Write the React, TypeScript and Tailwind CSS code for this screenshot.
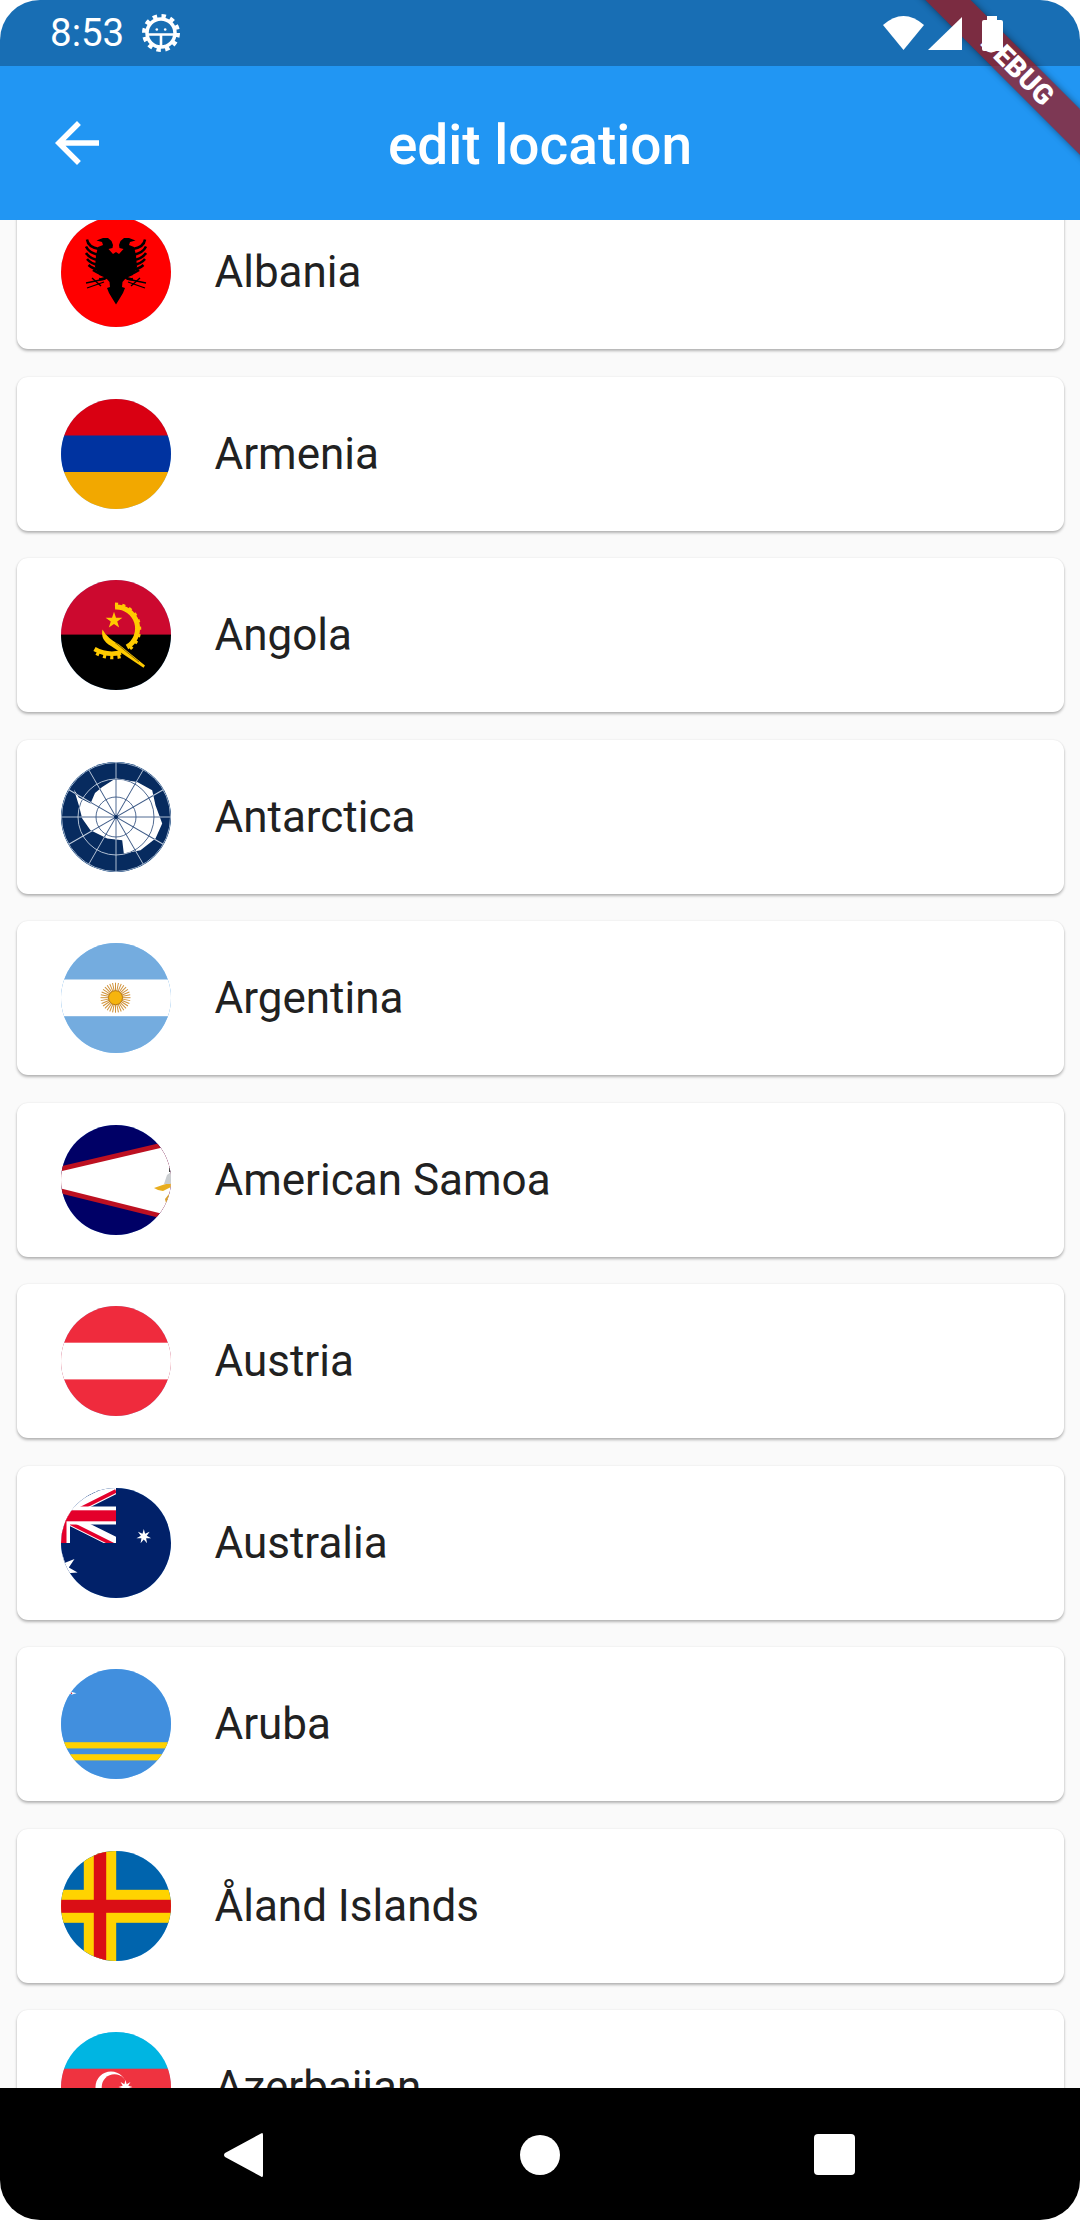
import type { ReactNode } from "react";

function starPoints(cx: number, cy: number, outer: number, inner: number, n: number) {
  const pts: string[] = [];
  for (let i = 0; i < n * 2; i++) {
    const r = i % 2 === 0 ? outer : inner;
    const a = (Math.PI * i) / n - Math.PI / 2;
    pts.push(`${(cx + r * Math.cos(a)).toFixed(2)},${(cy + r * Math.sin(a)).toFixed(2)}`);
  }
  return pts.join(" ");
}

const spokes = [0, 30, 60, 90, 120, 150];

function EagleHalf() {
  return (
    <g>
      <path
        d="M55 35L52 37L47.5 32L51.5 31L52 28L50.5 24L47 21L42 21L35.5 23.5L41 25L42 28L37 30L35 38L34 50L38 58L45 61L48.5 65L49 70L46 71L48 76L51 81L55 87.5Z"
        fill="#000"
      />
      <g fill="none" stroke="#000" strokeWidth="2.5">
        <path d="M26 22.5Q27 30 38 32" />
        <path d="M25 29.5Q28 36 38 38" />
        <path d="M25 36Q29 42 38 43" />
        <path d="M26 42Q30 47 38 48" />
        <path d="M27.5 48Q32 52 39 53" />
        <path d="M32 53Q36 56 42 57" />
        <path d="M38 62Q43 63 47 59" />
      </g>
      <g fill="none" stroke="#000" strokeWidth="1.3">
        <path d="M25 66L44 62" />
        <path d="M26 71L43 65" />
        <path d="M31 61L40 69" />
      </g>
    </g>
  );
}

function Albania() {
  return (
    <>
      <rect width="110" height="110" fill="#ff0000" />
      <EagleHalf />
      <g transform="translate(110 0) scale(-1 1)">
        <EagleHalf />
      </g>
    </>
  );
}

function Armenia() {
  return (
    <>
      <rect width="110" height="37" fill="#d90012" />
      <rect y="36.5" width="110" height="37" fill="#0033a0" />
      <rect y="73" width="110" height="37" fill="#f2a800" />
    </>
  );
}

function Angola() {
  return (
    <>
      <rect width="110" height="55" fill="#cc092f" />
      <rect y="54.6" width="110" height="56" fill="#000" />
      <g fill="none" stroke="#ffcb00">
        <path d="M54 27A21.5 21.5 0 0 1 66 67" strokeWidth="5" />
        <path d="M54 25A24 24 0 0 1 67 69" strokeWidth="5" strokeDasharray="3 4" />
        <path d="M33.5 69Q46 76 60 72.5" strokeWidth="4.5" />
        <path d="M36 72Q47 78 60 75" strokeWidth="6.5" strokeDasharray="3 4" />
      </g>
      <polygon points={starPoints(53, 40.5, 8.8, 3.4, 5)} fill="#ffcb00" />
      <path d="M41.5 49.5Q39 60 50 66L82.5 87.8L84 85.5L58 64.5Q46 58 41.5 49.5Z" fill="#ffcb00" />
      <path d="M54 62.5L78 82" stroke="#5a4500" strokeWidth="0.7" />
    </>
  );
}

const antarcticaBlob =
  "M13 27.6L17.8 35.6L29.5 41.6L34 31L41.2 25L54.5 16.6L76.2 20L91.2 28.3L94.5 43.3L101.2 61.6L94.5 76.6L79.5 88.3L62.8 91.6L61.2 78.3L46.2 76.6L29.5 68.3L21.2 56.6L17.8 43.3Z";

function AntarcticaGrid({ color }: { color: string }) {
  return (
    <g fill="none" stroke={color} strokeWidth="0.9">
      <circle cx="55" cy="55" r="20" />
      <circle cx="55" cy="55" r="38" />
      {spokes.map((a) => (
        <line key={a} x1="0" y1="55" x2="110" y2="55" transform={`rotate(${a} 55 55)`} />
      ))}
    </g>
  );
}

function Antarctica() {
  return (
    <>
      <rect width="110" height="110" fill="#072b5f" />
      <AntarcticaGrid color="#c3cfdf" />
      <path d={antarcticaBlob} fill="#fff" />
      <clipPath id="antarctica-land">
        <path d={antarcticaBlob} />
      </clipPath>
      <g clipPath="url(#antarctica-land)">
        <AntarcticaGrid color="#3d5a86" />
      </g>
      <circle cx="55" cy="55" r="2" fill="#072b5f" />
      <circle cx="55" cy="55" r="54.5" fill="none" stroke="#9db0c8" strokeWidth="1" />
    </>
  );
}

function Argentina() {
  return (
    <>
      <rect width="110" height="110" fill="#74acdf" />
      <rect y="36.5" width="110" height="36.7" fill="#fff" />
      <g stroke="#cf9138" strokeWidth="1">
        {Array.from({ length: 16 }).map((_, i) => (
          <line key={i} x1="39.5" y1="54.7" x2="69.5" y2="54.7" transform={`rotate(${i * 11.25} 54.5 54.7)`} />
        ))}
      </g>
      <circle cx="54.5" cy="54.7" r="7" fill="#f6b40e" stroke="#b97d18" strokeWidth="1" />
    </>
  );
}

function AmericanSamoa() {
  return (
    <>
      <rect width="110" height="110" fill="#000066" />
      <polygon points="-1,41.5 110,15.4 110,95.8 -1,68.2" fill="#bd1021" />
      <polygon points="-1,46.5 110,20.4 110,91 -1,63.2" fill="#fff" />
      <path d="M93 63L103 59.5L110 58L110 62L102 66L97 65Z" fill="#e8ad1f" />
      <path d="M103 59L106 50L110 47L110 59Z" fill="#c9cdd0" />
      <path d="M104 74L108 69L110 70L109 76L105 78Z" fill="#d9a02a" />
      <rect x="108" y="43" width="2" height="4" fill="#444" />
    </>
  );
}

function Austria() {
  return (
    <>
      <rect width="110" height="110" fill="#ef2b3d" />
      <rect y="36.7" width="110" height="36.7" fill="#fff" />
    </>
  );
}

function Australia() {
  return (
    <>
      <rect width="110" height="110" fill="#012169" />
      <clipPath id="union-jack">
        <rect x="-55" y="0" width="110" height="55" />
      </clipPath>
      <g clipPath="url(#union-jack)">
        <path d="M-55 0L55 55M55 0L-55 55" stroke="#fff" strokeWidth="11" />
        <path d="M0 27.5L55 0M0 27.5L55 55" stroke="#e4002b" strokeWidth="3.7" transform="translate(0 3)" />
        <rect x="-9" y="0" width="18" height="55" fill="#fff" />
        <rect x="0" y="18.5" width="55" height="18" fill="#fff" />
        <rect x="-5.5" y="0" width="11" height="55" fill="#e4002b" />
        <rect x="0" y="22.3" width="55" height="11" fill="#e4002b" />
      </g>
      <polygon points={starPoints(1, 81, 16, 7, 7)} fill="#fff" />
      <polygon points={starPoints(82.8, 48.5, 7.5, 3, 7)} fill="#fff" />
    </>
  );
}

function Aruba() {
  return (
    <>
      <rect width="110" height="110" fill="#418fde" />
      <rect y="73.2" width="110" height="6.2" fill="#ffd100" />
      <rect y="85.2" width="110" height="6.2" fill="#ffd100" />
      <polygon points="7.5,24.3 11,23 15.5,24.3 11,25.6" fill="#fff" />
      <circle cx="10.5" cy="24.3" r="0.7" fill="#c8102e" />
    </>
  );
}

function Aland() {
  return (
    <>
      <rect width="110" height="110" fill="#0064ad" />
      <rect x="22.8" width="32.4" height="110" fill="#ffd300" />
      <rect y="38.8" width="110" height="33" fill="#ffd300" />
      <rect x="32.8" width="12.4" height="110" fill="#da0e15" />
      <rect y="48.8" width="110" height="13" fill="#da0e15" />
    </>
  );
}

function Azerbaijan() {
  return (
    <>
      <rect width="110" height="37" fill="#00b5e2" />
      <rect y="36.7" width="110" height="37" fill="#ef3340" />
      <rect y="73.3" width="110" height="37" fill="#509e2f" />
      <circle cx="50" cy="55" r="15.5" fill="#fff" />
      <circle cx="53.5" cy="55" r="12.8" fill="#ef3340" />
      <polygon points={starPoints(64.5, 55, 7, 3, 8)} fill="#fff" />
    </>
  );
}

const countries: { name: string; flag: ReactNode }[] = [
  { name: "Albania", flag: <Albania /> },
  { name: "Armenia", flag: <Armenia /> },
  { name: "Angola", flag: <Angola /> },
  { name: "Antarctica", flag: <Antarctica /> },
  { name: "Argentina", flag: <Argentina /> },
  { name: "American Samoa", flag: <AmericanSamoa /> },
  { name: "Austria", flag: <Austria /> },
  { name: "Australia", flag: <Australia /> },
  { name: "Aruba", flag: <Aruba /> },
  { name: "Åland Islands", flag: <Aland /> },
  { name: "Azerbaijan", flag: <Azerbaijan /> },
];

function CountryCard({ name, flag }: { name: string; flag: ReactNode }) {
  return (
    <div className="mx-[16.5px] mb-[27.5px] flex h-[154px] shrink-0 items-center rounded-[11px] bg-white px-[44px] shadow-[0_2px_3px_rgba(0,0,0,0.28),0_0_2px_rgba(0,0,0,0.08)]">
      <div className="h-[110px] w-[110px] shrink-0 overflow-hidden rounded-full bg-[#90caf9]">
        <svg viewBox="0 0 110 110" className="block h-[110px] w-[110px]">
          {flag}
        </svg>
      </div>
      <span className="ml-[44px] text-[44px] leading-[58px] text-[#212121]">{name}</span>
    </div>
  );
}

function BugGear() {
  return (
    <svg width="40" height="40" viewBox="0 0 40 40" fill="none" className="ml-[17px]">
      <circle cx="20" cy="20" r="16.5" stroke="#fff" strokeWidth="5" strokeDasharray="4.3 4.34" />
      <circle cx="20" cy="20" r="14" stroke="#fff" strokeWidth="3.5" />
      <path d="M7 21.5H33M20 21.5V33" stroke="#fff" strokeWidth="2.6" />
      <circle cx="15.8" cy="16.5" r="1.3" fill="#fff" />
      <circle cx="24.2" cy="16.5" r="1.3" fill="#fff" />
    </svg>
  );
}

export default function App() {
  return (
    <div className="relative flex h-[2220px] w-[1080px] flex-col overflow-hidden rounded-[40px] bg-[#fafafa] font-['Roboto',sans-serif]">
      {/* status bar */}
      <div className="flex h-[66px] shrink-0 items-center bg-[#186eb4] pl-[50px] pr-[77px] text-white">
        <span className="text-[38.5px] leading-[66px]">8:53</span>
        <BugGear />
        <div className="relative z-20 ml-auto flex items-center">
          <svg width="41" height="34" viewBox="0 0 41 34">
            <path d="M0 9Q20.5 -9 41 9L20.5 34Z" fill="#fff" />
          </svg>
          <svg width="34" height="33" viewBox="0 0 34 33" className="ml-[4px]">
            <path d="M0 33L34 0V33Z" fill="#fff" />
          </svg>
          <svg width="21" height="35" viewBox="0 0 21 35" className="ml-[20px]">
            <path d="M5 0H15V4H19Q21 4 21 6V33Q21 35 19 35H2Q0 35 0 33V6Q0 4 2 4H5Z" fill="#fff" />
          </svg>
        </div>
      </div>

      {/* app bar */}
      <div className="relative z-10 flex h-[154px] shrink-0 items-center justify-center bg-[#2196f3]">
        <svg width="66" height="66" viewBox="0 0 24 24" className="absolute left-[44px] top-[44px]" fill="#fff">
          <path d="M20 11H7.83l5.59-5.59L12 4l-8 8 8 8 1.41-1.41L7.83 13H20v-2z" />
        </svg>
        <span className="mt-[4px] text-[55px] font-medium leading-[66px] text-white">edit location</span>
      </div>

      {/* list */}
      <div className="min-h-0 flex-1 overflow-hidden">
        <div className="mt-[-25px] flex flex-col">
          {countries.map((c) => (
            <CountryCard key={c.name} name={c.name} flag={c.flag} />
          ))}
        </div>
      </div>

      {/* nav bar */}
      <div className="relative z-10 flex h-[132px] shrink-0 items-center bg-black pt-[1px]">
        <svg width="39" height="46" viewBox="0 0 39 46" className="ml-[224px]">
          <path d="M37 1.5Q39 0 39 3V43Q39 46 37 44.5L1 25Q-1 23 1 21Z" fill="#fff" />
        </svg>
        <div className="ml-[257px] h-[40px] w-[40px] rounded-full bg-white" />
        <div className="ml-[254px] h-[41px] w-[41px] rounded-[4px] bg-white" />
      </div>

      {/* debug banner */}
      <div className="absolute left-[863px] top-[49px] z-[15] flex h-[32px] w-[300px] rotate-45 items-center justify-center bg-[#a50f0f]/70 shadow-[0_0_7px_rgba(0,0,0,0.45)]">
        <span className="ml-[12px] text-[28px] font-black leading-[28px] text-white">DEBUG</span>
      </div>
    </div>
  );
}
